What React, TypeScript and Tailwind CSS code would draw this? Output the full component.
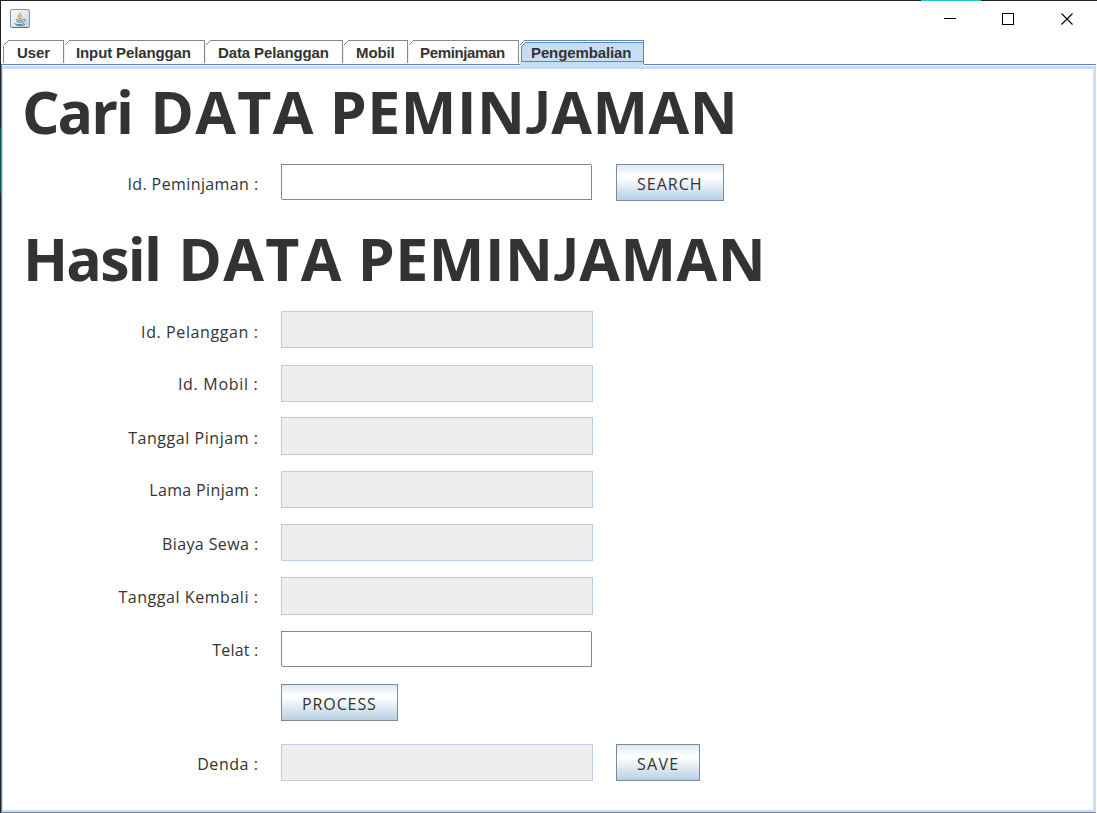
import React from 'react';

function Tab({ name, box, pad, first }: { name: string; box: string; pad: string; first?: boolean }) {
  return (
    <div className={`flex h-[23px] ${box}`}>
      <svg width="6" height="23" className="shrink-0" shapeRendering="crispEdges">
        <path d="M0.5 5.5L5.5 0.5" stroke="#7a8a99" fill="none" />
        <path d="M0.5 6V23" stroke={first ? '#7a8a99' : '#eeeeee'} fill="none" />
      </svg>
      <div className={`flex-1 border-t border-r border-[#7a8a99] ${pad}`}>{name}</div>
    </div>
  );
}

function Field({ editable }: { editable?: boolean }) {
  if (!editable) return <div className="h-full w-[312px] shrink-0 border border-[#b8cfe5] bg-[#eeeeee]" />;
  return (
    <div className="relative h-full w-[311px] shrink-0 border border-[#7a8a99] bg-white">
      <span className="absolute -bottom-px -left-px size-px bg-[#eeeeee]" />
      <span className="absolute -top-px -right-px size-px bg-[#eeeeee]" />
    </div>
  );
}

function Button({ text, className }: { text: string; className: string }) {
  return (
    <button
      className={`h-[37px] shrink-0 border border-[#7a8a99] bg-[linear-gradient(180deg,#dde8f3_0%,#ffffff_30%,#ffffff_36%,#b8cfe5_100%)] pt-[3px] pl-5 text-left whitespace-nowrap ${className}`}
    >
      {text}
    </button>
  );
}

function Title({ word, wordClass, className }: { word: string; wordClass: string; className: string }) {
  return (
    <h1 className={`h-[95px] text-[59px] leading-[84px] font-bold whitespace-nowrap ${className}`}>
      <span className={`inline-block ${wordClass}`}>{word}</span>{' '}
      <span className="-ml-[15px] inline-block w-[179px] tracking-[1.3px]">DATA</span>{' '}
      <span className="-ml-[15px] inline-block tracking-[0.5px]">
        PEMIN<span className="font-['Lato',sans-serif]">J</span>AMAN
      </span>
    </h1>
  );
}

function Row({ label, className, spacing, editable, children }: {
  label: string; className: string; spacing: string; editable?: boolean; children?: React.ReactNode;
}) {
  return (
    <div className={`flex ${className}`}>
      <div className="w-[278px] shrink-0 pr-[22.5px] text-right whitespace-pre">
        <span className={spacing}>{label}</span>
      </div>
      <Field editable={editable} />
      {children}
    </div>
  );
}

export default function App() {
  return (
    <div className="flex h-[813px] w-[1097px] overflow-hidden bg-white font-['Liberation_Sans',sans-serif] text-[#333333]">
      <div className="flex w-px shrink-0 flex-col bg-[#202426]">
        <div className="mt-[128px] h-[65px] bg-[#17545c]" />
      </div>
      <div className="flex flex-1 flex-col">
        <div className="flex h-px shrink-0 bg-[#202426]">
          <div className="ml-[920px] w-[60px] bg-[#27c3c4]" />
        </div>
        <header className="flex h-[39px] shrink-0 justify-between">
          <svg width="20" height="20" viewBox="0 0 20 20" className="mt-[8px] ml-[9px]">
            <defs>
              <linearGradient id="plate" x1="0" y1="0" x2="1" y2="1">
                <stop offset="0" stopColor="#ffffff" />
                <stop offset="1" stopColor="#c3d0da" />
              </linearGradient>
            </defs>
            <rect x="0.5" y="0.5" width="19" height="18" rx="1.5" fill="url(#plate)" stroke="#8196a6" />
            <path d="M1.5 18.5H18.5" stroke="#536f82" />
            <path d="M10.5 3.5C11 5.3 7.8 6 8.2 7.8C8.4 8.7 9.5 9 9.7 10M12 6C9.6 7 11.8 8 10.7 9.6" fill="none" stroke="#ef8e45" strokeWidth="1.3" />
            <path d="M6 10.6C8 11.5 11.4 11.4 13 10.6M6.5 12.6C8.3 13.4 11 13.4 12.5 12.7M13.4 10.4C16.5 9.8 15.5 12.5 13 13M4.6 14C3.5 16 12.5 16 14.3 14.3M6.5 16.4C9 17 13.5 16.8 15 15.5" fill="none" stroke="#55809d" strokeWidth="1" />
          </svg>
          <svg width="135" height="20" viewBox="0 0 135 20" className="mt-[8px] mr-[20px]" shapeRendering="crispEdges" fill="none" stroke="#000">
            <path d="M2 9.5H14" />
            <rect x="60.5" y="4.5" width="11" height="11" />
            <path d="M119.5 4.5L130.5 15.5M130.5 4.5L119.5 15.5" shapeRendering="auto" strokeWidth="1.1" />
          </svg>
        </header>
        <nav className="z-10 flex h-[24px] shrink-0 pl-[2px] text-[15px] leading-[23px] font-bold tracking-[-0.12px] whitespace-nowrap">
          <Tab name="User" box="w-[61px]" pad="pl-[8px]" first />
          <Tab name="Input Pelanggan" box="w-[141px]" pad="pl-[6px]" />
          <Tab name="Data Pelanggan" box="w-[138px]" pad="pl-[7px]" />
          <Tab name="Mobil" box="w-[65px]" pad="pl-[7px]" />
          <Tab name="Peminjaman" box="w-[111px] tracking-[-0.35px]" pad="pl-[6px]" />
          <div className="relative h-[28px] w-[125px] pt-px pl-[12px]">
            <svg width="125" height="28" className="absolute top-0 left-0" shapeRendering="crispEdges" fill="none">
              <path d="M1 22H125V28H1Z" fill="#c8ddf2" />
              <path d="M2.5 21.5V6.5L6.5 2.5H124.5V21.5Z" fill="#c8ddf2" stroke="#6382bf" />
              <path d="M0.5 5.5L5.5 0.5H124.5V24" stroke="#6382bf" />
            </svg>
            <span className="relative">Pengembalian</span>
          </div>
        </nav>
        <main className="flex min-h-0 flex-1 flex-col pr-px">
          <div className="h-px shrink-0 bg-[#6382bf]" />
          <div className="flex min-h-0 flex-1 flex-col border-l border-[#6382bf] pt-px">
            <div className="flex flex-1 flex-col border-t-[3px] border-r-[3px] border-b-2 border-l border-[#c8ddf2] font-['Open_Sans',sans-serif] text-[16px] leading-[22px]">
              <Title word="Cari" wordClass="w-[128px] tracking-[-2px]" className="pl-[19px]" />
              <Row label="Id. Peminjaman :" className="h-[36px]" spacing="relative top-[9px] tracking-[0.4px]" editable>
                <Button text="SEARCH" className="ml-[24px] w-[108px] tracking-[1px]" />
              </Row>
              <Title word="Hasil" wordClass="w-[155px] tracking-[-1.8px]" className="mt-[16px] pl-[20px]" />
              <Row label="Id. Pelanggan :" className="h-[37px]" spacing="relative top-[10px] tracking-[0.6px]" />
              <Row label="Id. Mobil :" className="mt-[17px] h-[37px]" spacing="relative top-[8px] tracking-[0.7px]" />
              <Row label="Tanggal Pinjam :" className="mt-[15px] h-[38px]" spacing="relative top-[10px] tracking-[0.55px]" />
              <Row label="Lama Pinjam :" className="mt-[16px] h-[37px]" spacing="relative top-[8px] tracking-[0.35px]" />
              <Row label="Biaya Sewa :" className="mt-[16px] h-[37px]" spacing="relative top-[9px] tracking-[0.4px]" />
              <Row label="Tanggal Kembali :" className="mt-[16px] h-[38px]" spacing="relative top-[9px] tracking-[0.55px]" />
              <Row label="Telat :" className="mt-[16px] h-[36px]" spacing="relative top-[8px] tracking-[0.2px]" editable />
              <div className="mt-[17px] flex pl-[278px]">
                <Button text="PROCESS" className="w-[117px] tracking-[0.9px]" />
              </div>
              <Row label="Denda :" className="mt-[23px] h-[37px]" spacing="relative top-[9px] tracking-[0.55px]">
                <Button text="SAVE" className="ml-[23px] w-[84px] tracking-[1.3px]" />
              </Row>
            </div>
            <div className="h-px shrink-0 bg-[#7a8a99]" />
          </div>
        </main>
      </div>
    </div>
  );
}
